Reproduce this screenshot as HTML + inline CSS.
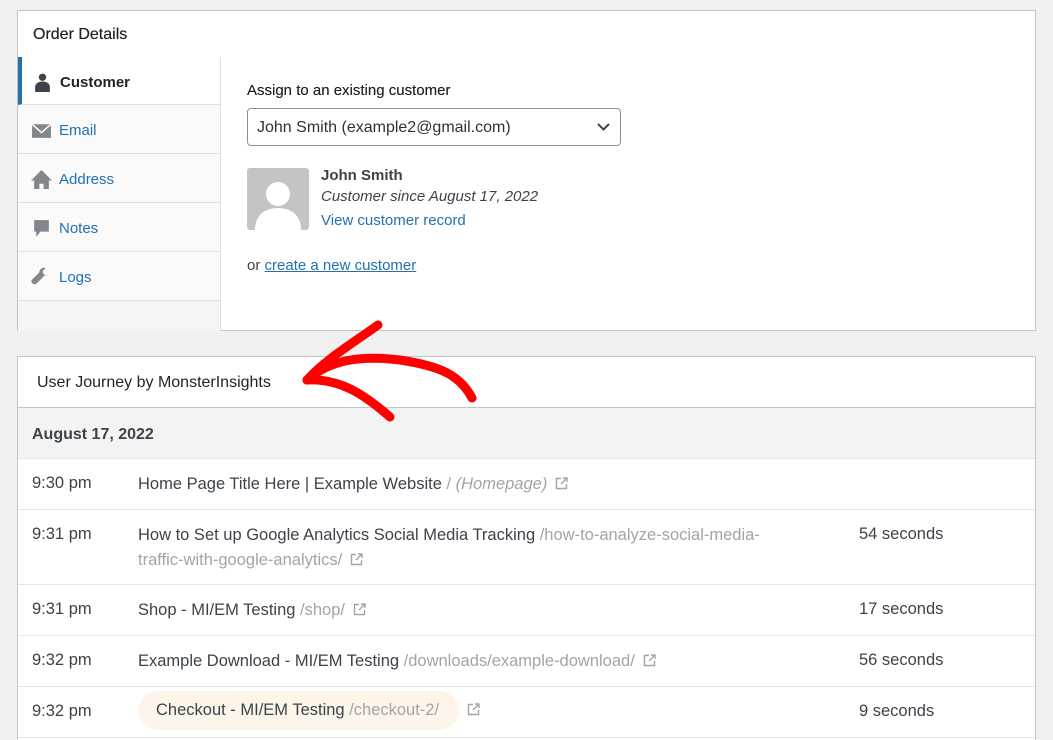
<!DOCTYPE html>
<html><head><meta charset="utf-8"><style>
*{box-sizing:border-box;margin:0;padding:0}
html,body{width:1053px;height:740px;overflow:hidden}
body{background:#f0f0f1;font-family:"Liberation Sans",sans-serif;color:#3c434a;position:relative}
.p1{position:absolute;left:17px;top:10px;width:1019px;height:321px;background:#fff;border:1px solid #c3c4c7}
.p1 h2{position:absolute;left:15px;top:15px;font-size:16px;font-weight:normal;color:#1d2327;text-shadow:0 0 .4px #1d2327}
.side{position:absolute;left:0;top:46px;width:203px;height:274px;background:#f5f5f5;border-right:1px solid #e0e0e0}
.tab{height:49px;border-bottom:1px solid #e0e0e0;background:#fafafa;display:flex;align-items:center;padding:3px 0 0 13px;font-size:15px;color:#2271b1}
.tab svg{width:21px;height:21px;margin-right:7px;fill:#82878c}
.tab.a{background:#fff;border-left:4px solid #2271b1;padding-left:10px;color:#1d2327;font-weight:bold;height:48px}
.a svg{fill:#3c434a}
.c{position:absolute;left:229px;top:70px;font-size:15px}
.sel{position:absolute;left:229px;top:97px;width:374px;height:38px;border:1px solid #8c8f94;border-radius:4px;font-size:16px;color:#2c3338;padding:10px 9px}
.av{position:absolute;left:229px;top:157px;width:62px;height:62px;background:#c4c4c4;border-radius:3px;overflow:hidden}
a{color:#2271b1;text-decoration:none}
.p2{position:absolute;left:17px;top:356px;width:1019px;height:400px;background:#fff;border:1px solid #c3c4c7}
.hd{height:51px;border-bottom:1px solid #c3c4c7;font-size:16px;color:#1d2327;padding:17px 19px}
.dt{height:51px;background:#f3f3f3;font-size:16px;font-weight:bold;padding:18px 14px;border-bottom:1px solid #e5e5e5}
.r{position:relative;height:51px;border-bottom:1px solid #e5e5e5;font-size:16.5px;color:#3c434a}
.r .t{position:absolute;left:14px;top:15px}
.r .n{position:absolute;left:120px;top:13px;line-height:25px;width:665px}
.r .s{position:absolute;left:841px;top:15px}
.g{color:#a0a5aa}
.e{display:inline-block;width:13px;height:13px;margin-left:8px;vertical-align:-1px}
</style></head><body>
<svg width="0" height="0" style="position:absolute"><defs><symbol id="ex" viewBox="0 0 13 13"><path d="M6 1.5H1.5v10h10V7" stroke="#a0a5aa" stroke-width="1.4" fill="none"/><path d="M8 1h4v4M12 1L6 7" stroke="#a0a5aa" stroke-width="1.4" fill="none"/></symbol></defs></svg>
<div class="p1">
<h2>Order Details</h2>
<div class="side">
<div class="tab a"><svg viewBox="0 0 20 20"><circle cx="10" cy="5" r="3.5"/><path d="M3 19v-5c0-3 3-5 7-5s7 2 7 5v5z"/></svg>Customer</div>
<div class="tab"><svg viewBox="0 0 20 20"><path d="M1 4h18v13H1z"/><path d="M1 4l9 8 9-8" stroke="#fafafa" stroke-width="1.5" fill="none"/></svg>Email</div>
<div class="tab"><svg viewBox="0 0 20 20"><path d="M10 1L0 11h3v8h5v-5h4v5h5v-8h3z"/></svg>Address</div>
<div class="tab"><svg viewBox="0 0 20 20"><path d="M3 2h14v11h-8l-4 5v-5H3z"/></svg>Notes</div>
<div class="tab"><svg viewBox="0 0 20 20"><path d="M18 5l-3 3-3-1-1-3 3-3c-3-1-6 1-6 4l-7 7c-1 1-1 3 1 4s3 0 4-1l7-7c3 0 5-3 5-3z"/></svg>Logs</div>
</div>
<div class="c" style="top:71px;color:#1d2327;text-shadow:0 0 .3px #1d2327">Assign to an existing customer</div>
<div class="sel">John Smith (example2@gmail.com)<svg style="position:absolute;right:10px;top:14px" width="13" height="9" viewBox="0 0 13 9"><path d="M1 1l5.5 5.5L12 1" stroke="#3c434a" stroke-width="2" fill="none"/></svg></div>
<div class="av"><svg width="62" height="62"><circle cx="31" cy="26" r="12" fill="#fff"/><path d="M8 62c0-15 10-22 23-22s23 7 23 22z" fill="#fff"/></svg></div>
<div class="c" style="left:303px;top:156px;font-weight:bold;color:#3c434a">John Smith</div>
<div class="c" style="left:303px;top:177px;font-style:italic">Customer since August 17, 2022</div>
<div class="c" style="left:303px;top:201px"><a>View customer record</a></div>
<div class="c" style="top:246px">or <a style="text-decoration:underline">create a new customer</a></div>
</div>
<div class="p2">
<div class="hd">User Journey by MonsterInsights</div>
<div class="dt">August 17, 2022</div>
<div class="r"><span class="t">9:30 pm</span><span class="n">Home Page Title Here | Example Website <span class="g">/ <i>(Homepage)</i></span><svg class="e"><use href="#ex"/></svg></span></div>
<div class="r" style="height:75px"><span class="t">9:31 pm</span><span class="n">How to Set up Google Analytics Social Media Tracking <span class="g">/how-to-analyze-social-media-traffic-with-google-analytics/</span><svg class="e"><use href="#ex"/></svg></span><span class="s">54 seconds</span></div>
<div class="r"><span class="t">9:31 pm</span><span class="n">Shop - MI/EM Testing <span class="g">/shop/</span><svg class="e"><use href="#ex"/></svg></span><span class="s">17 seconds</span></div>
<div class="r"><span class="t">9:32 pm</span><span class="n">Example Download - MI/EM Testing <span class="g">/downloads/example-download/</span><svg class="e"><use href="#ex"/></svg></span><span class="s">56 seconds</span></div>
<div class="r"><span class="t">9:32 pm</span><span class="n" style="top:4px"><span style="display:inline-block;background:#fdf5ea;border-radius:20px;padding:7px 20px 7px 18px">Checkout - MI/EM Testing <span class="g">/checkout-2/</span></span><svg class="e"><use href="#ex"/></svg></span><span class="s">9 seconds</span></div>
</div>
<svg style="position:absolute;left:0;top:0" width="1053" height="740"><g stroke="#f00" stroke-width="9" fill="none" stroke-linecap="round" stroke-linejoin="round">
<path d="M378 325C350 345 325 360 307 380"/>
<path d="M307 380C340 378 365 395 390 417"/>
<path d="M307 380C330 360 360 355 400 360C440 366 460 375 472 398"/>
</g></svg>
</body></html>
